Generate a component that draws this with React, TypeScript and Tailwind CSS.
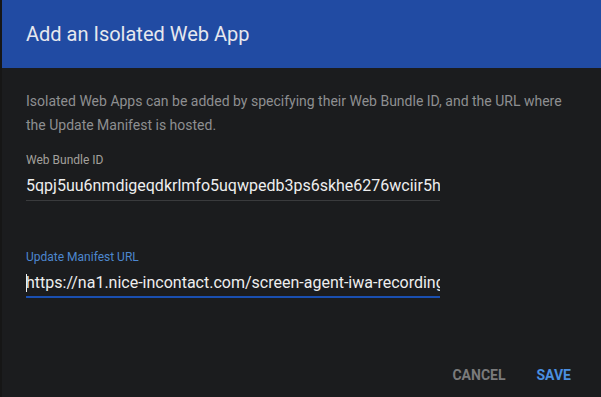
export default function App() {
  return (
    <div className="flex h-[397px] w-[601px] bg-[#141414]" style={{ fontFamily: "Roboto, 'Liberation Sans', sans-serif" }}>
      <div className="w-[2px] shrink-0 bg-[#161616]" />
      <div className="flex flex-1 flex-col bg-[#1b1c1e]">
        <div className="flex h-[68px] items-center bg-[#214ba3] pl-[24px] text-[20px] text-[#e6e8ee]">
          Add an Isolated Web App
        </div>
        <div className="pl-[24px] pt-[21px]">
          <p className="w-[550px] text-[14px] leading-[24px] text-[#8e8f91]">
            Isolated Web Apps can be added by specifying their Web Bundle ID, and the URL where the Update Manifest is hosted.
          </p>
          <div className="mt-[15px] w-[414px]">
            <div className="text-[12px] leading-[16px] text-[#a3a09c]">Web Bundle ID</div>
            <div className="mt-[9px] h-[18px] overflow-hidden whitespace-nowrap text-[16px] leading-[18px] text-[#eeeeee]">
              5qpj5uu6nmdigeqdkrlmfo5uqwpedb3ps6skhe6276wciir5h
            </div>
            <div className="mt-[5px] h-px bg-[#3a3b3d]" />
          </div>
          <div className="mt-[48px] w-[414px]">
            <div className="text-[12px] leading-[16px] text-[#4d87cf]">Update Manifest URL</div>
            <div className="relative mt-[9px] h-[18px] overflow-hidden whitespace-nowrap text-[16px] leading-[18px] text-[#eeeeee]">
              https://na1.nice-incontact.com/screen-agent-iwa-recording/update.json
              <span className="absolute left-0 top-0 h-[18px] w-px bg-[#eeeeee]" />
            </div>
            <div className="mt-[4px] h-[2px] bg-[#1a4fb0]" />
          </div>
        </div>
        <div className="mt-auto flex justify-end gap-[31px] pb-[11px] pr-[30px] text-[14px] font-bold">
          <span className="text-[#7a7a7b]">CANCEL</span>
          <span className="text-[#4a8fe0]">SAVE</span>
        </div>
      </div>
    </div>
  );
}
